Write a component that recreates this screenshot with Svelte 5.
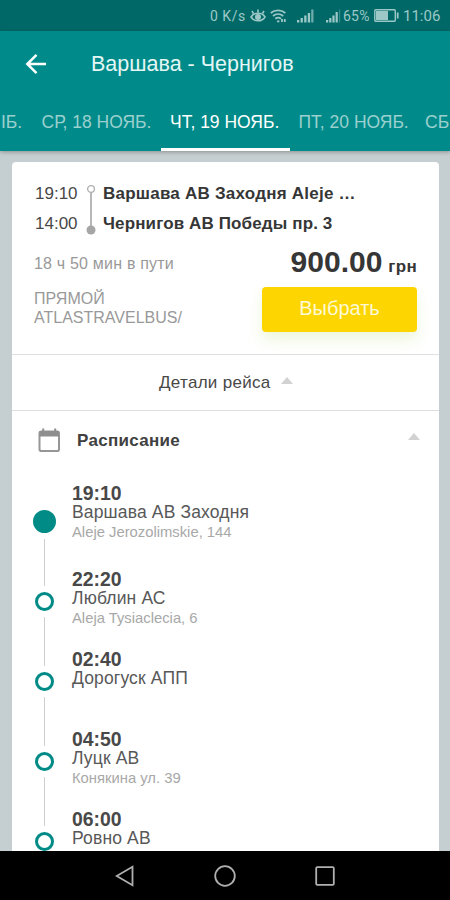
<script>
    const tabs = [
        { label: 'ІБ.', cls: 'first' },
        { label: 'СР, 18 НОЯБ.', cls: '' },
        { label: 'ЧТ, 19 НОЯБ.', cls: 'active' },
        { label: 'ПТ, 20 НОЯБ.', cls: '' },
        { label: 'СБ', cls: 'last' }
    ];

    const stops = [
        { time: '19:10', name: 'Варшава АВ Заходня', address: 'Aleje Jerozolimskie, 144' },
        { time: '22:20', name: 'Люблин АС', address: 'Aleja Tysiaclecia, 6' },
        { time: '02:40', name: 'Дорогуск АПП', address: '' },
        { time: '04:50', name: 'Луцк АВ', address: 'Конякина ул. 39' },
        { time: '06:00', name: 'Ровно АВ', address: '' }
    ];
</script>

<div class="screen">
    <div class="status">
        <span class="speed">0 K/s</span>
        <svg class="eye" width="16" height="16" viewBox="0 0 16 16" fill="none" stroke="currentColor" stroke-width="1.6">
            <path d="M1 9c3-5 11-5 14 0-3 5-11 5-14 0z" />
            <circle cx="8" cy="9" r="2.2" fill="currentColor" />
            <path d="M8 4.5V1.5M3.5 5.5L2 3M12.5 5.5L14 3" />
        </svg>
        <svg class="wifi" width="17" height="14" viewBox="0 0 17 14" fill="none" stroke="currentColor" stroke-width="1.8">
            <path d="M.8 4c4-3.6 10.500-3.600 14.500 0M3 7c3-2.600 7.200-2.600 10.200 0M5.300 9.800c1.700-1.400 4-1.400 5.700 0" />
            <path d="M7 12.300h2.400M12 10v3M14.800 10v3" />
        </svg>
        <svg class="signal one" width="17" height="14" viewBox="0 0 17 14" fill="currentColor">
            <path d="M0 11h2.300v2.500H0zM3.600 9h2.300v4.500H3.600zM7.200 6.500h2.300v7H7.200zM10.800 4h2.300v9.500h-2.300z" />
            <path d="M14.200 .5h2.300v13h-2.300z" opacity=".7" />
        </svg>
        <svg class="signal two" width="15" height="14" viewBox="0 0 15 14" fill="currentColor">
            <path d="M0 11h2.200v2.500H0zM3.200 9h2.200v4.500H3.200zM6.400 6.500h2.200v7H6.400zM9.600 3h2.200v10.500H9.600z" />
            <path d="M13 .5h1.200v13H13z" opacity=".35" />
        </svg>
        <span class="percent">65%</span>
        <svg class="battery" width="26" height="13" viewBox="0 0 26 13">
            <rect x=".8" y=".8" width="20.500" height="11.400" rx="1" fill="none" stroke="currentColor" stroke-width="1.400" />
            <path d="M2 2h12v9H2z" fill="currentColor" />
            <path d="M23.700 3.500v6" stroke="currentColor" stroke-width="1.800" />
        </svg>
        <span class="clock">11:06</span>
    </div>

    <header>
        <div class="bar">
            <svg width="22" height="22" viewBox="0 0 22 22" fill="none" stroke="#fff" stroke-width="2.500">
                <path d="M21 11H2.500M11.500 1.800L2.300 11l9.200 9.200" />
            </svg>
            <h1>Варшава - Чернигов</h1>
        </div>
        <nav>
            {#each tabs as tab}
                <div class="tab {tab.cls}"><span>{tab.label}</span></div>
            {/each}
        </nav>
    </header>

    <main>
        <div class="card">
            <section class="trip">
                <div class="route">
                    <div class="times">
                        <span>19:10</span>
                        <span>14:00</span>
                    </div>
                    <svg width="10" height="52" viewBox="0 0 10 52">
                        <path d="M5 8v34" stroke="#b0b0b0" stroke-width="1.800" />
                        <circle cx="5" cy="5" r="3.400" fill="#fff" stroke="#b0b0b0" stroke-width="1.300" />
                        <circle cx="5" cy="46" r="4.500" fill="#a6a6a6" />
                    </svg>
                    <div class="places">
                        <span class="from">Варшава АВ Заходня Aleje …</span>
                        <span class="to">Чернигов АВ Победы пр. 3</span>
                    </div>
                </div>
                <div class="summary">
                    <span class="duration">18 ч 50 мин в пути</span>
                    <div class="price"><b>900.00</b><span>грн</span></div>
                </div>
                <div class="order">
                    <div class="carrier">
                        <span>ПРЯМОЙ</span>
                        <span>ATLASTRAVELBUS/</span>
                    </div>
                    <button>Выбрать</button>
                </div>
            </section>

            <div class="details">
                <span>Детали рейса</span>
                <i class="caret"></i>
            </div>

            <section class="schedule">
                <div class="schedule-head">
                    <svg width="23" height="25" viewBox="0 0 23 25">
                        <rect x="1.500" y="3.500" width="19.500" height="19.500" rx="1.800" fill="none" stroke="#969696" stroke-width="2" />
                        <path d="M1.500 3h19.500v5.500H1.500z" fill="#8e8e8e" />
                        <path d="M5.200 .5v3M17.200 .5v3" stroke="#8e8e8e" stroke-width="2" />
                    </svg>
                    <h2>Расписание</h2>
                    <i class="caret"></i>
                </div>
                {#each stops as stop, i}
                    <div class="stop" class:start={i === 0}>
                        <div class="rail">
                            <i class="line above"></i>
                            <i class="dot"></i>
                            <i class="line below"></i>
                        </div>
                        <div class="info">
                            <span class="time">{stop.time}</span>
                            <span class="name">{stop.name}</span>
                            <span class="address">{stop.address}</span>
                        </div>
                    </div>
                {/each}
            </section>
        </div>
    </main>

    <footer>
        <svg width="20" height="22" viewBox="0 0 20 22"><path d="M17.500 1.800v18.400L1.700 11z" /></svg>
        <svg width="22" height="22" viewBox="0 0 22 22"><circle cx="11" cy="11" r="9.800" /></svg>
        <svg width="20" height="20" viewBox="0 0 20 20"><rect x="1.200" y="1.200" width="17.600" height="17.600" rx="1" /></svg>
    </footer>
</div>

<style>
    :global(body) {
        margin: 0;
    }

    .screen {
        width: 450px;
        height: 900px;
        display: flex;
        flex-direction: column;
        overflow: hidden;
        background: #c5ced0;
        font-family: 'Liberation Sans', Arial, sans-serif;
        color: #484848;
    }

    .screen span,
    h1,
    h2 {
        white-space: nowrap;
    }

    h1,
    h2 {
        margin: 0;
    }

    .status {
        height: 31px;
        flex: none;
        display: flex;
        align-items: center;
        padding-left: 210px;
        background: #006967;
        color: #9cc8c7;
        font-family: Roboto, sans-serif;
        font-size: 14px;
        line-height: 32px;
    }

    .speed {
        width: 40px;
        letter-spacing: 0.5px;
    }

    .wifi {
        margin-left: 4px;
    }

    .one {
        margin-left: 10px;
    }

    .two {
        margin-left: 12px;
    }

    .percent {
        width: 29px;
        margin-left: 2px;
        letter-spacing: 0.2px;
    }

    .battery {
        margin-left: 2px;
    }

    .clock {
        margin-left: 3px;
        font-size: 15px;
    }

    header {
        height: 120px;
        flex: none;
        background: #008b8a;
        color: #fff;
        box-shadow: 0 1px 4px rgba(0, 0, 0, 0.3);
        z-index: 1;
    }

    .bar {
        height: 66px;
        display: flex;
        align-items: center;
        padding-left: 25px;
    }

    h1 {
        margin-left: 44px;
        font-size: 21.5px;
        font-weight: 400;
        color: #e4f6f5;
    }

    nav {
        height: 54px;
        display: flex;
        overflow: hidden;
    }

    .tab {
        box-sizing: border-box;
        width: 128.5px;
        flex: none;
        padding-left: 9px;
        border-bottom: 3px solid transparent;
        line-height: 51px;
        font-size: 17.5px;
        color: #9bd0cf;
    }

    .tab.first {
        width: 32.5px;
        padding-left: 1px;
    }

    .tab.active {
        color: #fff;
        border-color: #fff;
    }

    .tab.last {
        width: 31px;
        padding-left: 7px;
    }

    main {
        flex: 1;
        min-height: 0;
        padding: 11px 11px 0 12px;
        overflow: hidden;
    }

    .card {
        height: 750px;
        background: #fff;
        border-radius: 4px 4px 0 0;
    }

    .trip {
        box-sizing: border-box;
        height: 193px;
        padding: 17px 22px 0;
        border-bottom: 1px solid #e0e0e0;
    }

    .route {
        height: 60px;
        display: flex;
    }

    .route span {
        display: block;
        line-height: 30px;
        font-size: 17px;
    }

    .times {
        width: 51px;
        padding-left: 1px;
    }

    .route svg {
        margin-top: 5px;
    }

    .places {
        margin-left: 7px;
        font-weight: 700;
        color: #363636;
    }

    .from {
        letter-spacing: 0.23px;
    }

    .to {
        letter-spacing: 0.13px;
    }

    .summary {
        height: 46px;
        display: flex;
        justify-content: space-between;
    }

    .duration {
        line-height: 50px;
        font-size: 16px;
        letter-spacing: 0.2px;
        color: #999;
    }

    .price {
        line-height: 46px;
        font-weight: 700;
        color: #363636;
    }

    .price b {
        font-size: 30px;
    }

    .price span {
        margin-left: 6px;
        font-size: 17px;
        letter-spacing: 0.3px;
    }

    .order {
        display: flex;
        justify-content: space-between;
        align-items: flex-start;
        margin-top: 2px;
    }

    .carrier {
        padding-top: 2px;
    }

    .carrier span {
        display: block;
        line-height: 19px;
        font-size: 16px;
        color: #999;
    }

    button {
        width: 155px;
        height: 45px;
        padding: 0 0 3px;
        border: 0;
        border-radius: 4px;
        background: #fdd500;
        box-shadow: 0 8px 14px rgba(190, 225, 130, 0.28);
        color: #fff9d6;
        font-family: inherit;
        font-size: 20px;
    }

    .details {
        box-sizing: border-box;
        height: 56px;
        display: flex;
        align-items: center;
        padding-left: 147px;
        border-bottom: 1px solid #dedede;
        font-size: 17px;
        letter-spacing: 0.3px;
    }

    .details .caret {
        margin: -4px 0 0 10px;
    }

    .caret {
        border: 6px solid transparent;
        border-top: 0;
        border-bottom: 7px solid #d2d2d2;
    }

    .schedule-head {
        height: 72px;
        display: flex;
        padding-left: 26px;
    }

    .schedule-head svg {
        margin-top: 17px;
    }

    h2 {
        margin-left: 16px;
        line-height: 59px;
        font-size: 17px;
        letter-spacing: 0.3px;
        color: #404040;
    }

    .schedule-head .caret {
        height: 0;
        margin: 22px 19px 0 auto;
    }

    .stop {
        height: 80px;
        display: flex;
    }

    .rail {
        width: 60px;
        margin-left: 2px;
        display: flex;
        flex-direction: column;
        align-items: center;
    }

    .line {
        width: 1px;
        background: #cfcfcf;
    }

    .above {
        height: 17px;
    }

    .below {
        flex: 1;
    }

    .dot {
        box-sizing: border-box;
        width: 19px;
        height: 19px;
        margin: 6px 0;
        border: 3px solid #008b87;
        border-radius: 50%;
    }

    .start {
        height: 86px;
    }

    .start .above {
        height: 21px;
        background: none;
    }

    .start .dot {
        width: 23px;
        height: 23px;
        background: #008b87;
    }

    .info {
        margin-left: -2px;
    }

    .info span {
        display: block;
        line-height: 20px;
    }

    .info .time {
        font-size: 19.4px;
        font-weight: 700;
    }

    .info .name {
        margin-top: -1px;
        font-size: 17.5px;
        letter-spacing: 0.15px;
        color: #585858;
    }

    .info .address {
        font-size: 14.8px;
        color: #a8a8a8;
    }

    footer {
        height: 49px;
        flex: none;
        display: flex;
        align-items: center;
        padding-left: 115px;
        background: #000;
        z-index: 1;
    }

    footer svg {
        fill: none;
        stroke: #b0b0b0;
        stroke-width: 1.8;
        margin-right: 79px;
    }
</style>
